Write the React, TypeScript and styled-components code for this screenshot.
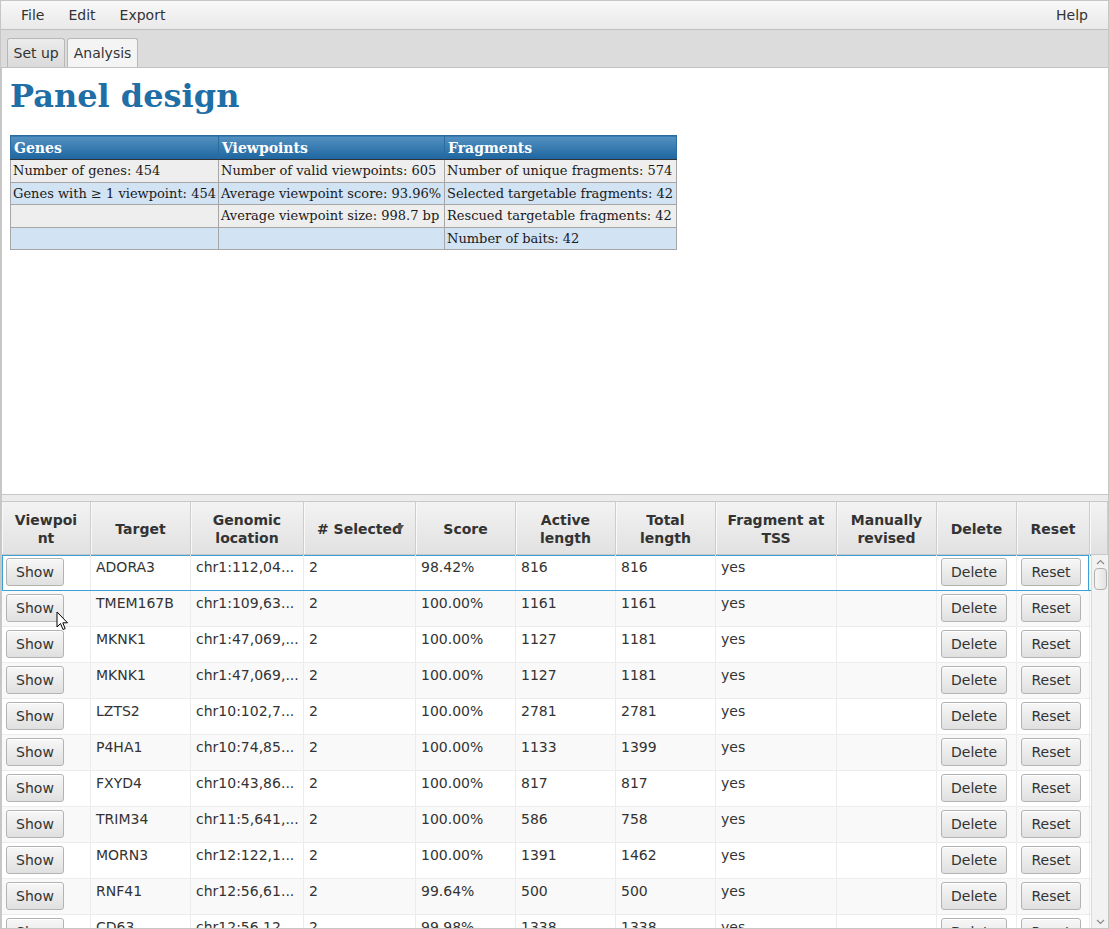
import React from "react";
import styled, { createGlobalStyle, css } from "styled-components";

const Global = createGlobalStyle`
  html, body { margin: 0; padding: 0; background: #fff; }
  body { font-family: "DejaVu Sans", "Liberation Sans", sans-serif; }
  * { box-sizing: border-box; }
`;

const Window = styled.div`
  width: 1109px;
  height: 929px;
  border: 1px solid #c6c6c6;
  display: flex;
  flex-direction: column;
  overflow: hidden;
  position: relative;
  background: #fff;
`;

const MenuBar = styled.div`
  height: 29px;
  flex: none;
  display: flex;
  align-items: center;
  padding: 0 0 0 12px;
  background: linear-gradient(#f8f8f8, #e9e9e9);
  border-bottom: 1px solid #bfbfbf;
`;

const MenuItem = styled.div<{ $push?: boolean }>`
  font-size: 14px;
  color: #333;
  padding: 0 8px 0 8px;
  margin-right: 8px;
  ${(p) => p.$push && css`margin-left: auto; margin-right: 12px;`}
`;

const TabBar = styled.div`
  height: 37px;
  flex: none;
  display: flex;
  align-items: flex-end;
  gap: 2px;
  padding-left: 6px;
  background: #dcdcdc;
`;

const Tab = styled.div<{ $active?: boolean }>`
  height: 29px;
  padding: 0 5.5px;
  display: flex;
  align-items: center;
  font-size: 14px;
  color: #333;
  border: 1px solid #b8b8b8;
  border-bottom: none;
  border-radius: 3px 3px 0 0;
  background: ${(p) => (p.$active ? "#f4f4f4" : "linear-gradient(#ececec, #dadada)")};
`;

const Content = styled.div`
  flex: 1;
  min-height: 0;
  display: flex;
  flex-direction: column;
  border-top: 1px solid #c2c2c2;
  border-left: 1px solid #c8c8c8;
`;

const WebPane = styled.div`
  height: 426px;
  flex: none;
  padding: 8px 8px 0 8px;
  font-family: "DejaVu Serif", "Liberation Serif", serif;
`;

const Title = styled.h1`
  margin: 0 0 19px 0;
  font-size: 32px;
  line-height: 40px;
  font-weight: bold;
  color: #1f6ea6;
  font-family: "DejaVu Serif", "Liberation Serif", serif;
`;

const Summary = styled.table`
  border-collapse: collapse;
  table-layout: fixed;
  width: 666px;
  font-size: 13px;
  color: #1a1a1a;
`;

const SumHead = styled.th`
  height: 24px;
  padding: 0 3px;
  text-align: left;
  font-size: 14px;
  font-weight: bold;
  color: #fff;
  background: linear-gradient(#5391c0, #1d65a0);
  border: 1px solid #2a6c9f;
  border-left: 1px solid #c6dbeb;
  border-bottom: 1px solid #333;
  &:first-child { border-left: 1px solid #2a6c9f; }
`;

const SumRow = styled.tr<{ $blue?: boolean }>`
  background: ${(p) => (p.$blue ? "#d2e3f4" : "#eeeeee")};
`;

const SumCell = styled.td`
  height: 22.5px;
  padding: 0 2px;
  border: 1px solid #a6a6a6;
  white-space: nowrap;
  overflow: hidden;
`;

const Divider = styled.div`
  height: 8px;
  flex: none;
  border-top: 1px solid #c6c6c6;
  border-bottom: 1px solid #c8c8c8;
  background: #ececec;
`;

const TableView = styled.div`
  flex: 1;
  min-height: 0;
  display: flex;
  flex-direction: column;
  overflow: hidden;
`;

const COLS = [89, 100, 113, 112, 100, 100, 100, 121, 100, 80, 73];
const gridCols = COLS.map((c) => `${c}px`).join(" ");

const HeaderRow = styled.div`
  display: grid;
  grid-template-columns: ${gridCols} 1fr;
  height: 53px;
  flex: none;
  background: linear-gradient(#f3f3f3, #e1e1e1);
  border-bottom: 1px solid #c8c8c8;
`;

const HeaderCell = styled.div`
  position: relative;
  display: flex;
  align-items: center;
  justify-content: center;
  text-align: center;
  padding-top: 1px;
  font-size: 14px;
  font-weight: bold;
  line-height: 18px;
  color: #333;
  border-right: 1px solid #cdcdcd;
  box-shadow: inset 1px 0 #f9f9f9;
`;

const SortArrow = styled.span`
  position: absolute;
  right: 11px;
  top: 23px;
  width: 0;
  height: 0;
  border-left: 4px solid transparent;
  border-right: 4px solid transparent;
  border-top: 6px solid #555;
`;

const Body = styled.div`
  flex: 1;
  min-height: 0;
  display: flex;
`;

const Rows = styled.div`
  flex: 1;
  min-width: 0;
  overflow: hidden;
`;

const Row = styled.div<{ $alt?: boolean; $focus?: boolean }>`
  display: grid;
  grid-template-columns: ${gridCols};
  height: 36px;
  background: ${(p) => (p.$alt ? "#f9f9f9" : "#ffffff")};
  border-bottom: 1px solid ${(p) => (p.$focus ? "#3ba0d8" : "#ececec")};
  ${(p) =>
    p.$focus &&
    css`
      box-shadow: inset 0 1px #3ba0d8, inset -2px 0 #fff, inset -3px 0 #3ba0d8, inset 1px 0 #3ba0d8;
    `}
`;

const Cell = styled.div`
  padding: 4px 5px 0 5px;
  font-size: 14px;
  line-height: 17px;
  color: #333;
  white-space: nowrap;
  overflow: hidden;
  border-right: 1px solid #ececec;
`;

const BtnCell = styled.div`
  padding: 3px 4px 0 4px;
  border-right: 1px solid #ececec;
`;

const Button = styled.div<{ $w: number }>`
  width: ${(p) => p.$w}px;
  height: 28px;
  display: flex;
  align-items: center;
  justify-content: center;
  font-size: 14px;
  color: #333;
  border: 1px solid #b3b3b3;
  border-radius: 3px;
  background: linear-gradient(#f7f7f7, #e0e0e0);
  box-shadow: inset 0 1px #ffffff;
`;

const ScrollBar = styled.div`
  width: 17px;
  flex: none;
  display: flex;
  flex-direction: column;
  align-items: center;
  background: #f2f2f2;
  border-left: 1px solid #dcdcdc;
`;

const Arrow = styled.div`
  height: 13px;
  width: 100%;
  display: flex;
  align-items: center;
  justify-content: center;
  flex: none;
`;

const Thumb = styled.div`
  width: 13px;
  height: 22px;
  border: 1px solid #b0b0b0;
  border-radius: 4px;
  background: linear-gradient(90deg, #f6f6f6, #e3e3e3);
`;

const Track = styled.div`
  flex: 1;
`;

const Cursor = styled.svg`
  position: absolute;
  left: 55px;
  top: 610px;
`;

type R = [string, string, string, string, string, string];
const data: R[] = [
  ["ADORA3", "chr1:112,04...", "98.42%", "816", "816", "yes"],
  ["TMEM167B", "chr1:109,63...", "100.00%", "1161", "1161", "yes"],
  ["MKNK1", "chr1:47,069,...", "100.00%", "1127", "1181", "yes"],
  ["MKNK1", "chr1:47,069,...", "100.00%", "1127", "1181", "yes"],
  ["LZTS2", "chr10:102,7...", "100.00%", "2781", "2781", "yes"],
  ["P4HA1", "chr10:74,85...", "100.00%", "1133", "1399", "yes"],
  ["FXYD4", "chr10:43,86...", "100.00%", "817", "817", "yes"],
  ["TRIM34", "chr11:5,641,...", "100.00%", "586", "758", "yes"],
  ["MORN3", "chr12:122,1...", "100.00%", "1391", "1462", "yes"],
  ["RNF41", "chr12:56,61...", "99.64%", "500", "500", "yes"],
  ["CD63", "chr12:56,12...", "99.98%", "1338", "1338", "yes"],
];

const headers: string[][] = [
  ["Viewpoi", "nt"],
  ["Target"],
  ["Genomic", "location"],
  ["# Selected"],
  ["Score"],
  ["Active", "length"],
  ["Total", "length"],
  ["Fragment at", "TSS"],
  ["Manually", "revised"],
  ["Delete"],
  ["Reset"],
];

export default function App() {
  return (
    <>
      <Global />
      <Window>
        <MenuBar>
          <MenuItem>File</MenuItem>
          <MenuItem>Edit</MenuItem>
          <MenuItem>Export</MenuItem>
          <MenuItem $push>Help</MenuItem>
        </MenuBar>
        <TabBar>
          <Tab>Set up</Tab>
          <Tab $active>Analysis</Tab>
        </TabBar>
        <Content>
          <WebPane>
            <Title>Panel design</Title>
            <Summary>
              <colgroup>
                <col style={{ width: 208 }} />
                <col style={{ width: 226 }} />
                <col style={{ width: 232 }} />
              </colgroup>
              <thead>
                <tr>
                  <SumHead>Genes</SumHead>
                  <SumHead>Viewpoints</SumHead>
                  <SumHead>Fragments</SumHead>
                </tr>
              </thead>
              <tbody>
                <SumRow>
                  <SumCell>Number of genes: 454</SumCell>
                  <SumCell>Number of valid viewpoints: 605</SumCell>
                  <SumCell>Number of unique fragments: 574</SumCell>
                </SumRow>
                <SumRow $blue>
                  <SumCell>Genes with ≥ 1 viewpoint: 454</SumCell>
                  <SumCell>Average viewpoint score: 93.96%</SumCell>
                  <SumCell>Selected targetable fragments: 42</SumCell>
                </SumRow>
                <SumRow>
                  <SumCell></SumCell>
                  <SumCell>Average viewpoint size: 998.7 bp</SumCell>
                  <SumCell>Rescued targetable fragments: 42</SumCell>
                </SumRow>
                <SumRow $blue>
                  <SumCell></SumCell>
                  <SumCell></SumCell>
                  <SumCell>Number of baits: 42</SumCell>
                </SumRow>
              </tbody>
            </Summary>
          </WebPane>
          <Divider />
          <TableView>
            <HeaderRow>
              {headers.map((h, i) => (
                <HeaderCell key={i}>
                  <span>
                    {h.map((l, j) => (
                      <React.Fragment key={j}>
                        {j > 0 && <br />}
                        {l}
                      </React.Fragment>
                    ))}
                  </span>
                  {i === 3 && <SortArrow />}
                </HeaderCell>
              ))}
              <HeaderCell />
            </HeaderRow>
            <Body>
              <Rows>
                {data.map((r, i) => (
                  <Row key={i} $alt={i % 2 === 1} $focus={i === 0}>
                    <BtnCell>
                      <Button $w={58}>Show</Button>
                    </BtnCell>
                    <Cell>{r[0]}</Cell>
                    <Cell>{r[1]}</Cell>
                    <Cell>2</Cell>
                    <Cell>{r[2]}</Cell>
                    <Cell>{r[3]}</Cell>
                    <Cell>{r[4]}</Cell>
                    <Cell>{r[5]}</Cell>
                    <Cell></Cell>
                    <BtnCell>
                      <Button $w={66}>Delete</Button>
                    </BtnCell>
                    <BtnCell>
                      <Button $w={60}>Reset</Button>
                    </BtnCell>
                  </Row>
                ))}
              </Rows>
              <ScrollBar>
                <Arrow>
                  <svg width="9" height="6" viewBox="0 0 9 6">
                    <path d="M1 5 L4.5 1.5 L8 5" fill="none" stroke="#8a8a8a" strokeWidth="1.2" />
                  </svg>
                </Arrow>
                <Thumb />
                <Track />
                <Arrow>
                  <svg width="9" height="6" viewBox="0 0 9 6">
                    <path d="M1 1 L4.5 4.5 L8 1" fill="none" stroke="#8a8a8a" strokeWidth="1.2" />
                  </svg>
                </Arrow>
              </ScrollBar>
            </Body>
          </TableView>
        </Content>
        <Cursor width="13" height="21" viewBox="0 0 13 21">
          <path
            d="M1 1 L1 16 L4.5 12.5 L7 18.5 L9.2 17.6 L6.8 11.8 L11.5 11.8 Z"
            fill="#fff"
            stroke="#000"
            strokeWidth="1"
            strokeLinejoin="round"
          />
        </Cursor>
      </Window>
    </>
  );
}
